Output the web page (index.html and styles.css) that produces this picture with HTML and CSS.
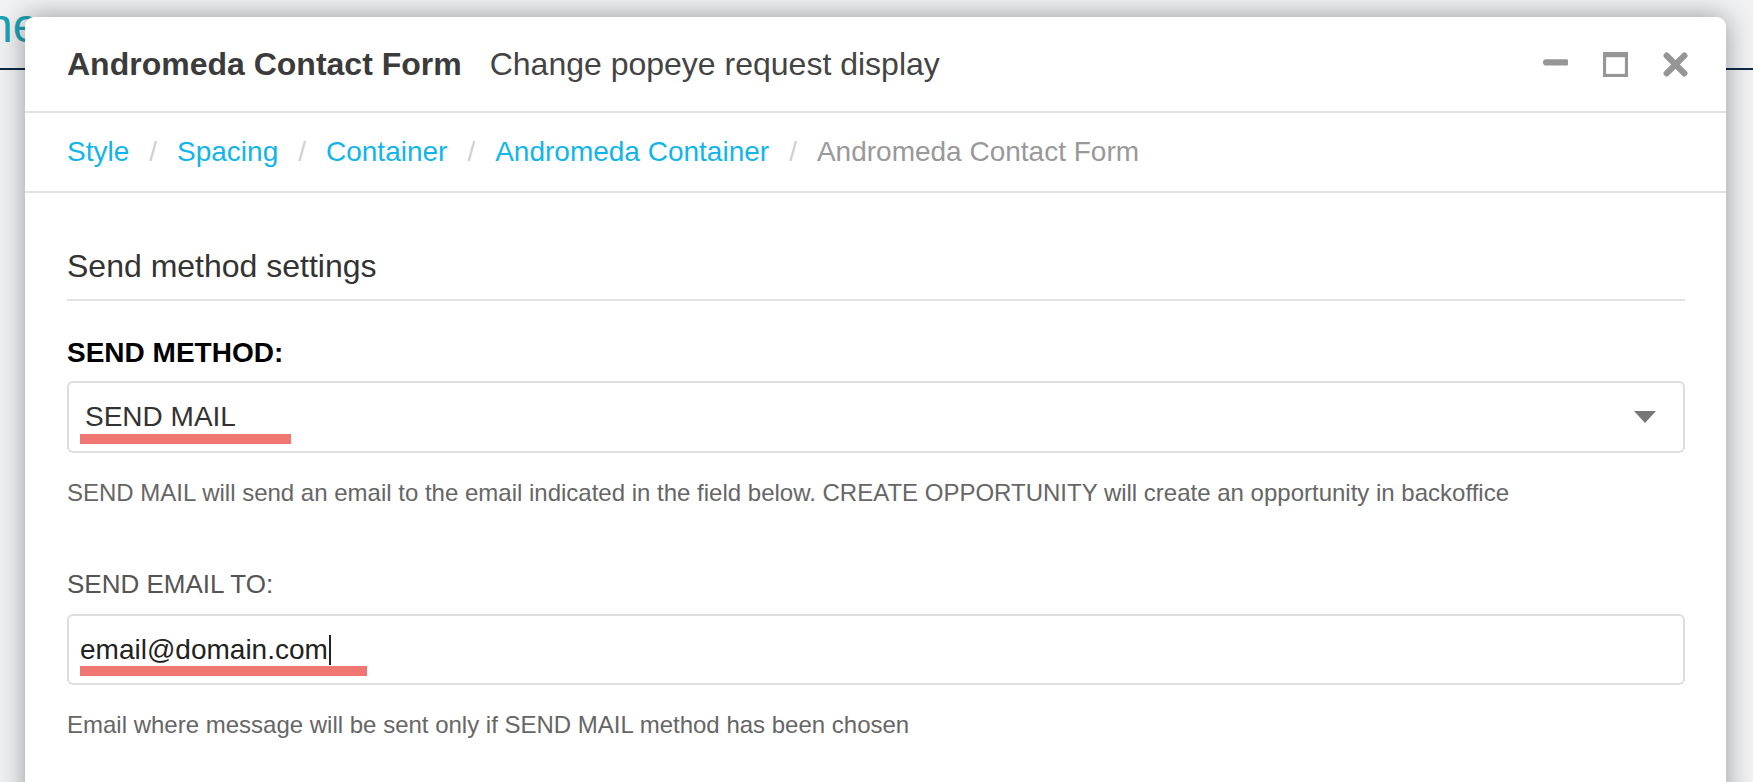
FILE: index.html
```html
<!DOCTYPE html>
<html lang="en">
<head>
<meta charset="UTF-8" />
<title>Andromeda Contact Form</title>
<link rel="stylesheet" href="styles.css">
</head>
<body>
<header class="page-header">
  <span class="page-logo">ne</span>
</header>

<div class="modal">
  <div class="modal__head">
    <h1 class="modal__title">Andromeda Contact Form</h1>
    <span class="modal__subtitle">Change popeye request display</span>
    <div class="modal__tools">
      <svg class="tool" viewBox="0 0 24 24" aria-label="Minimize"><rect x="0" y="7" width="25" height="6" rx="3" fill="#969696"/></svg>
      <svg class="tool" viewBox="0 0 24 24" aria-label="Maximize"><rect x="1.5" y="2.5" width="21" height="20" fill="none" stroke="#969696" stroke-width="3"/><rect x="0" y="0" width="24" height="5" fill="#969696"/></svg>
      <svg class="tool" viewBox="0 0 24 24" aria-label="Close"><path d="M3.5 3.5 L20.5 20.5 M20.5 3.5 L3.5 20.5" stroke="#969696" stroke-width="6" stroke-linecap="round"/></svg>
    </div>
  </div>

  <nav class="crumbs">
    <a href="#">Style</a><span class="crumbs__sep">/</span>
    <a href="#">Spacing</a><span class="crumbs__sep">/</span>
    <a href="#">Container</a><span class="crumbs__sep">/</span>
    <a href="#">Andromeda Container</a><span class="crumbs__sep">/</span>
    <span class="crumbs__active">Andromeda Contact Form</span>
  </nav>

  <div class="modal__body">
    <h2 class="section-title">Send method settings</h2>

    <div class="field">
      <label class="field__label field__label--strong">SEND METHOD:</label>
      <div class="select">
        <span class="select__value">SEND MAIL</span>
        <span class="mark mark--select"></span>
        <svg class="select__arrow" viewBox="0 0 22 12"><path d="M0 0 H22 L11 12 Z" fill="#777"/></svg>
      </div>
      <p class="field__help">SEND MAIL will send an email to the email indicated in the field below. CREATE OPPORTUNITY will create an opportunity in backoffice</p>
    </div>

    <div class="field field--second">
      <label class="field__label">SEND EMAIL TO:</label>
      <div class="input">
        <span class="input__value">email@domain.com</span><span class="caret"></span>
        <span class="mark mark--input"></span>
      </div>
      <p class="field__help">Email where message will be sent only if SEND MAIL method has been chosen</p>
    </div>
  </div>
</div>
</body>
</html>
```

FILE: styles.css
```css
/* page behind the dialog */
body {
  margin: 0;
  font-family: 'Liberation Sans', Arial, sans-serif;
  background: #f1f2f4;
  height: 782px;
  overflow: hidden;
}
.page-header {
  height: 68px;
  border-bottom: 2px solid #0e2a44;
  overflow: hidden;
}
.page-logo {
  display: block;
  margin-left: -14px;
  margin-top: -2px;
  font-size: 48px;
  line-height: 56px;
  color: #1aa2b6;
}

/* dialog */
.modal {
  position: absolute;
  left: 25px;
  top: 17px;
  width: 1701px;
  height: 800px;
  background: #fff;
  border-radius: 9px 9px 0 0;
  box-shadow: 0 0 28px rgba(0,0,0,0.38);
}
.modal__head {
  height: 94px;
  display: flex;
  align-items: center;
  padding: 0 38px 0 42px;
  border-bottom: 2px solid #e2e2e2;
}
.modal__title {
  margin: 0;
  font-size: 32px;
  font-weight: 700;
  color: #3b3b3b;
}
.modal__subtitle {
  margin-left: 28px;
  font-size: 32px;
  color: #444;
}
.modal__tools {
  margin-left: auto;
  display: flex;
  gap: 35px;
  align-items: center;
}
.tool {
  width: 25px;
  height: 25px;
  display: block;
}

.crumbs {
  height: 78px;
  display: flex;
  align-items: center;
  padding-left: 42px;
  border-bottom: 2px solid #e2e2e2;
  font-size: 28px;
}
.crumbs a {
  color: #12b4ec;
  text-decoration: none;
}
.crumbs__sep {
  color: #d0d0d0;
  margin: 0 20px;
}
.crumbs__active {
  color: #999;
}

.modal__body {
  padding: 54px 41px 0 42px;
}
.section-title {
  margin: 0;
  font-size: 32px;
  font-weight: 400;
  line-height: 38px;
  color: #333;
  padding-bottom: 14px;
  border-bottom: 2px solid #e2e2e2;
}

.field {
  margin-top: 34px;
}
.field--second {
  margin-top: 62px;
}
.field__label {
  display: block;
  font-size: 26px;
  line-height: 30px;
  color: #555;
  margin-bottom: 15px;
}
.field__label--strong {
  font-size: 28px;
  line-height: 32px;
  font-weight: 700;
  color: #000;
  margin-top: 36px;
  margin-bottom: 12px;
}
.select, .input {
  position: relative;
  height: 67px;
  border: 2px solid #dedede;
  border-radius: 6px;
  display: flex;
  align-items: center;
  font-size: 28px;
}
.select {
  height: 68px;
  padding-left: 16px;
}
.input {
  padding-left: 11px;
}
.select__value {
  color: #333;
}
.input__value {
  color: #222;
}
.caret {
  display: inline-block;
  width: 2px;
  height: 30px;
  margin-left: 1px;
  background: #222;
}
.select__arrow {
  position: absolute;
  right: 27px;
  top: 28px;
  width: 22px;
  height: 12px;
}

/* red annotation marks */
.mark {
  position: absolute;
  left: 11px;
  height: 10px;
  background: #f07672;
}
.mark--select {
  top: 51px;
  width: 211px;
}
.mark--input {
  top: 50px;
  width: 287px;
}

.field__help {
  margin: 26px 0 0;
  font-size: 24px;
  line-height: 28px;
  color: #666;
}
```
